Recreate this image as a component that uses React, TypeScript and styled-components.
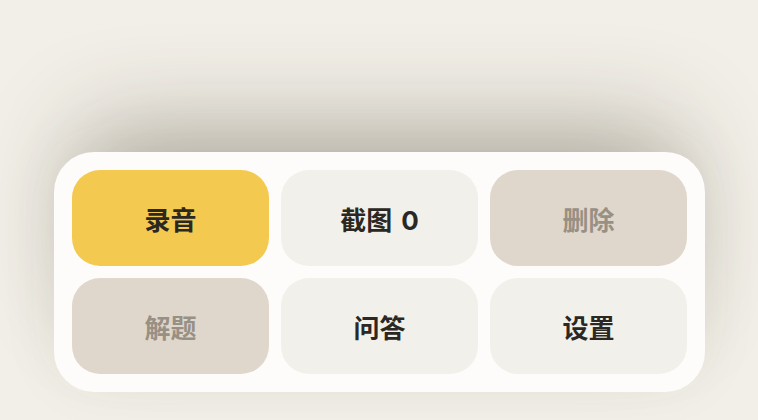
import * as React from 'react'
import styled, { createGlobalStyle } from 'styled-components'

const Global = createGlobalStyle`
    html, body {
        margin: 0;
        padding: 0;
        background: #f2efe8;
    }
    body {
        font-family: "Noto Sans CJK SC", "Noto Sans", sans-serif;
    }
`

const Page = styled.div`
    height: 100vh;
    display: flex;
    flex-direction: column;
    justify-content: flex-end;
    align-items: center;
    padding-bottom: 28px;
    padding-left: 1px;
    box-sizing: border-box;
`

const Panel = styled.div`
    width: 651px;
    box-sizing: border-box;
    padding: 18px;
    background: #fdfcfa;
    border-radius: 40px;
    box-shadow:
        0 -54px 100px -30px rgba(60, 50, 30, 0.32),
        0 -10px 60px rgba(60, 50, 30, 0.07);
    display: grid;
    grid-template-columns: repeat(3, 1fr);
    grid-auto-rows: 96px;
    gap: 12px;
`

type Tone = 'primary' | 'normal' | 'muted'

const tones = {
    primary: { bg: '#f3c94f', fg: '#2b2824' },
    normal: { bg: '#f2f0ea', fg: '#2b2824' },
    muted: { bg: '#dfd7cb', fg: '#989084' },
}

const Key = styled.button<{ $tone: Tone }>`
    border: none;
    outline: none;
    border-radius: 28px;
    background: ${p => tones[p.$tone].bg};
    color: ${p => tones[p.$tone].fg};
    font-family: "Inter", "Noto Sans CJK SC", "Noto Sans", sans-serif;
    font-size: 26px;
    font-weight: 700;
    word-spacing: 3px;
    display: flex;
    align-items: center;
    justify-content: center;
    padding: 0;
    cursor: pointer;
`

const keys: { label: string; tone: Tone }[] = [
    { label: '录音', tone: 'primary' },
    { label: '截图 0', tone: 'normal' },
    { label: '删除', tone: 'muted' },
    { label: '解题', tone: 'muted' },
    { label: '问答', tone: 'normal' },
    { label: '设置', tone: 'normal' },
]

export default function App() {
    return <>
        <Global />
        <Page>
            <Panel>
                {keys.map(k => <Key key={k.label} $tone={k.tone}>{k.label}</Key>)}
            </Panel>
        </Page>
    </>
}
